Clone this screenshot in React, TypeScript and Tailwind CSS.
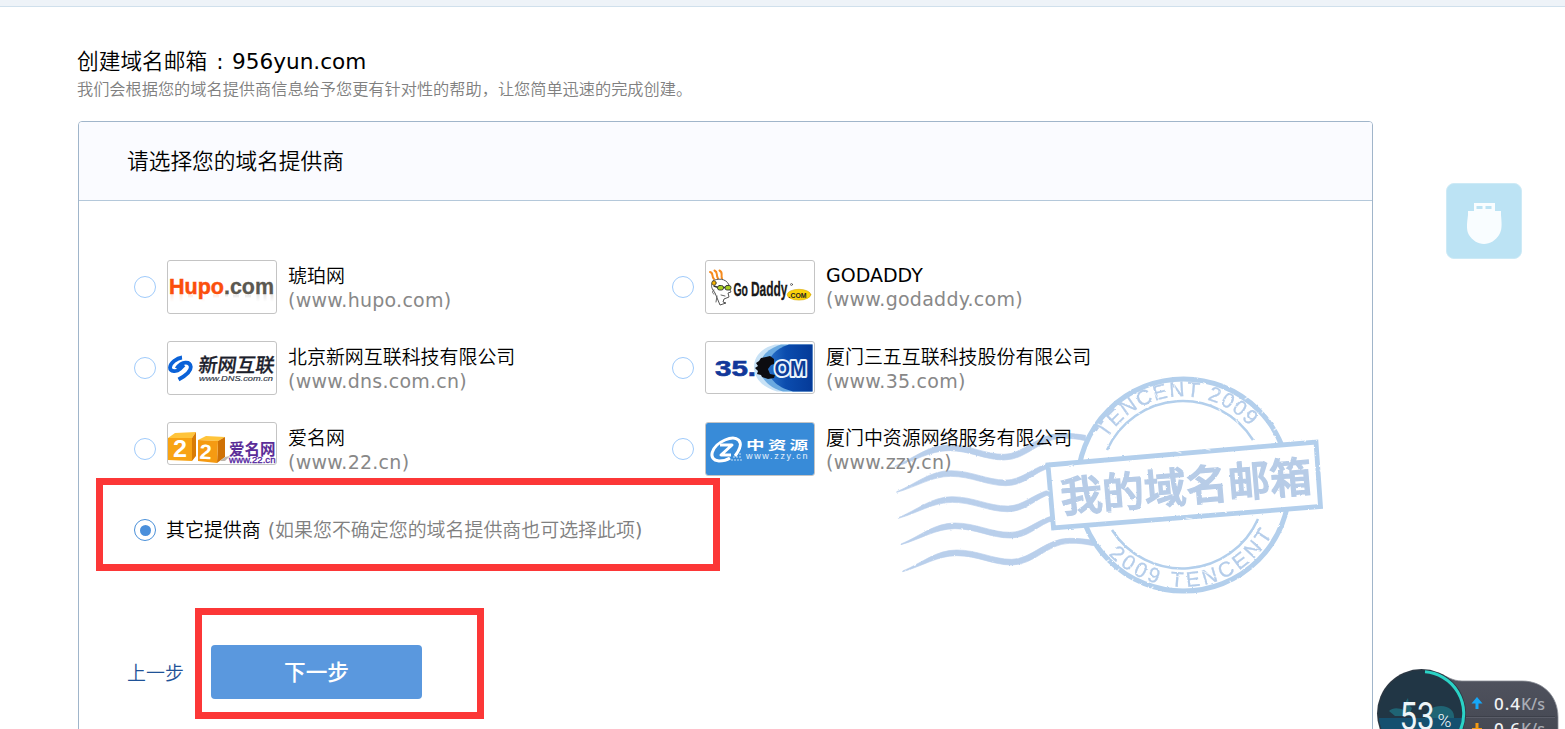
import { FC, ReactNode } from "react";

interface Provider {
  name: ReactNode;
  url: string;
  logo: ReactNode;
  logoClass: string;
  textClass: string;
}

const HupoLogo: FC = () => (
  <svg width="108" height="52" viewBox="1 1 108 52" fontFamily="Liberation Sans, sans-serif" fontWeight="bold" fontSize="22.500">
    <defs>
      <linearGradient id="hupoFade" x1="0" y1="0" x2="0" y2="1">
        <stop offset="0" stopColor="#fff" stopOpacity="0.500" />
        <stop offset="0.800" stopColor="#fff" />
      </linearGradient>
    </defs>
    <g opacity="0.4" strokeWidth="3">
      <path d="M5 34.500v8M14 34.500v8M21 36h5M36 39v3M46 36h6" stroke="#ff8a50" />
      <path d="M58 35h3M66 36h6M78 36h6M91 34.500v7M98 34.500v7M105 34.500v7" stroke="#8c8a84" />
    </g>
    <rect x="2" y="34" width="106" height="10" fill="url(#hupoFade)" />
    <text x="2" y="33.500" fill="#fb4f0c" stroke="#fb4f0c" strokeWidth="0.5" textLength="55" lengthAdjust="spacingAndGlyphs">Hupo</text>
    <text x="57" y="33.500" fill="#5b5850" stroke="#5b5850" strokeWidth="0.3" textLength="50" lengthAdjust="spacingAndGlyphs">.com</text>
  </svg>
);

const GodaddyLogo: FC = () => (
  <svg width="108" height="52" viewBox="1 1 108 52" fill="none" strokeLinecap="round">
    <path d="M5 12c4 1 1 4 4 7M9.500 10.500c4 2 1 4 3.500 8M14.500 10.500c4 2 1 4 2.500 8" stroke="#f68b1f" strokeWidth="2" />
    <path d="M8 21c4-3 13-3 16 4l0 3 2 4-3 1 1 4-5 2-1 3 3 1-6 2-5-12-2-3c-2-3-2-6 0-9z" fill="#fff" stroke="#555" strokeWidth="1" />
    <path d="M9 30c-2 0-2 4 0 4M16 35l4 1M12 36l-1 6" stroke="#666" strokeWidth="1" />
    <circle cx="9" cy="23" r="2.200" fill="#f7b500" stroke="#333" strokeWidth="0.700" />
    <path d="M9 26l4 1.500h12" stroke="#333" strokeWidth="1.400" />
    <rect x="12.500" y="25.500" width="6" height="4.500" rx="2" fill="#a6ce1f" stroke="#333" strokeWidth="0.900" />
    <rect x="20" y="25.500" width="6" height="4.500" rx="2" fill="#a6ce1f" stroke="#333" strokeWidth="0.900" />
    <g fontFamily="Liberation Sans, sans-serif" fontWeight="bold" fill="#181818" stroke="#181818" strokeWidth="0.300">
      <text x="28.500" y="36" fontSize="18" textLength="14.500" lengthAdjust="spacingAndGlyphs">Go</text>
      <text x="46" y="36" fontSize="21" textLength="36.500" lengthAdjust="spacingAndGlyphs">Daddy</text>
    </g>
    <circle cx="86.500" cy="24.500" r="1" stroke="#444" strokeWidth="0.700" />
    <ellipse cx="94" cy="34.700" rx="11.800" ry="5.400" fill="#fbd20b" stroke="#d7a800" strokeWidth="0.600" />
    <text x="83.500" y="37.500" fontFamily="Liberation Sans, sans-serif" fontWeight="bold" fontSize="7.500" fill="#222" textLength="18" lengthAdjust="spacingAndGlyphs">.COM</text>
  </svg>
);

const DnsLogo: FC = () => (
  <svg width="108" height="52" viewBox="1 1 108 52">
    <g fill="none" stroke="#0b62d8" strokeWidth="3.800">
      <path d="M15 16.500C10 17 3 22 3 26.500C3 31 10 31 13 28L17 24" />
      <path d="M9.500 27.500C15 20 23 20 23.800 26C24 31 18 35 11.500 38.500" />
    </g>
    <g transform="skewX(-8)">
      <text x="35" y="31" fontFamily="Noto Sans CJK SC, sans-serif" fontWeight="500" fontSize="19.500" fill="#1b202b" stroke="#1b202b" strokeWidth="0.300" textLength="76" lengthAdjust="spacingAndGlyphs">新网互联</text>
    </g>
    <text x="32" y="40" fontFamily="Liberation Sans, sans-serif" fontStyle="italic" fontSize="8" fill="#2b3343" stroke="#2b3343" strokeWidth="0.150" textLength="74" lengthAdjust="spacingAndGlyphs">www.DNS.com.cn</text>
  </svg>
);

const Com35Logo: FC = () => (
  <svg width="108" height="51" viewBox="1 1 108 51">
    <defs>
      <linearGradient id="blue35" x1="0" x2="1">
        <stop offset="0" stopColor="#2a72c8" />
        <stop offset="0.400" stopColor="#0b4cae" />
        <stop offset="1" stopColor="#053a98" />
      </linearGradient>
    </defs>
    <path d="M107.500 3.500H70C56 7 49 16 49 26S56 46 72 50.500H107.500z" fill="#c8e2f6" />
    <path d="M107.500 3.500H76C62 8 55 16 55 26S62 46 78 50.500H107.500z" fill="#6aa9e0" />
    <path d="M107.500 3.500H84C70 8 63 16 63 26S70 46 88 50.500H107.500z" fill="url(#blue35)" />
    <g fontFamily="Liberation Sans, sans-serif" fontWeight="bold" fontSize="21.500">
      <text x="10" y="34.800" fill="#12389a" stroke="#12389a" strokeWidth="0.600" textLength="41" lengthAdjust="spacingAndGlyphs">35.</text>
      <text x="69.500" y="34.800" fill="#0b3c98" stroke="#e8f3fc" strokeWidth="4" paintOrder="stroke" strokeLinejoin="round" textLength="32" lengthAdjust="spacingAndGlyphs">OM</text>
    </g>
    <path d="M69 18L65 15l-4 1-5 1-2 3-3 2 2 3-3 2 3 3-1 3 4 1 1 2 6 2 6-1 1-3-5-1-2-5 3-4 3-1z" fill="#0c0c10" />
  </svg>
);

const Cn22Logo: FC = () => (
  <svg width="108" height="41" viewBox="1 1 108 41">
    <path d="M1 16l7-5 21-1-4 6z" fill="#ffc43a" />
    <path d="M25 16l4-6v24l-4 5z" fill="#d87b05" />
    <path d="M1 16h24v23L1 38z" fill="#f8a313" />
    <path d="M31 18l8-4 19 1-7 4z" fill="#ffc43a" />
    <path d="M51 19l7-4v20l-8 6z" fill="#cf7104" />
    <path d="M31 18l20 1-1 22-19-2z" fill="#f59a12" />
    <path d="M58 35l5-1-5 5h-5z" fill="#bdb6ad" />
    <g fontFamily="Liberation Sans, sans-serif" fontWeight="bold" fill="#fff">
      <text x="6" y="35" fontSize="23" textLength="14" lengthAdjust="spacingAndGlyphs">2</text>
      <text x="32.500" y="37" fontSize="21" textLength="12" lengthAdjust="spacingAndGlyphs" transform="rotate(3 39 30)">2</text>
    </g>
    <text x="62" y="32.500" fontFamily="Noto Sans CJK SC, sans-serif" fontWeight="bold" fontSize="15.500" fill="#5b2d98" textLength="46.500" lengthAdjust="spacingAndGlyphs">爱名网</text>
    <text x="62" y="40.500" fontFamily="Liberation Sans, sans-serif" fontSize="8.500" fill="#5426a0" stroke="#5426a0" strokeWidth="0.300" textLength="46.500" lengthAdjust="spacingAndGlyphs">www.22.cn</text>
  </svg>
);

const ZzyLogo: FC = () => (
  <svg width="108" height="52" viewBox="1 1 108 52">
    <rect width="110" height="54" fill="#388bd8" />
    <g fill="none" stroke="#fff">
      <path d="M30 34C42 18 31 13 20 18C6 24 2 38 14 39C18 39 22 38 25 36" strokeWidth="3" />
      <path d="M15 23H27L16 33H26" strokeWidth="3" strokeLinejoin="round" />
      <path d="M26 38h11M28 35h9M31 32h6" strokeWidth="1.200" strokeDasharray="2 1" opacity="0.700" />
    </g>
    <g transform="translate(41 28) scale(1.55 1)">
      <text fontFamily="Noto Sans CJK SC, sans-serif" fontWeight="bold" fontSize="12" fill="#fff" textLength="40">中资源</text>
    </g>
    <text x="41" y="36.500" fontFamily="Liberation Sans, sans-serif" fontSize="9" fill="#e6f2fc" textLength="61.500">www.zzy.cn</text>
  </svg>
);

const leftProviders: Provider[] = [
  {
    name: "琥珀网",
    url: "(www.hupo.com)",
    logo: <HupoLogo />,
    logoClass: "h-[54px]",
    textClass: "pt-1",
  },
  {
    name: "北京新网互联科技有限公司",
    url: "(www.dns.com.cn)",
    logo: <DnsLogo />,
    logoClass: "h-[54px]",
    textClass: "pt-1",
  },
  {
    name: "爱名网",
    url: "(www.22.cn)",
    logo: <Cn22Logo />,
    logoClass: "h-[43px]",
    textClass: "pt-1",
  },
];

const rightProviders: Provider[] = [
  {
    name: <span className="text-[19px] font-normal">GODADDY</span>,
    url: "(www.godaddy.com)",
    logo: <GodaddyLogo />,
    logoClass: "h-[54px]",
    textClass: "pt-[3px]",
  },
  {
    name: "厦门三五互联科技股份有限公司",
    url: "(www.35.com)",
    logo: <Com35Logo />,
    logoClass: "h-[53px]",
    textClass: "pt-1",
  },
  {
    name: "厦门中资源网络服务有限公司",
    url: "(www.zzy.cn)",
    logo: <ZzyLogo />,
    logoClass: "h-[54px]",
    textClass: "pt-1",
  },
];

const ProviderOption: FC<{ provider: Provider }> = ({ provider }) => (
  <label className="flex h-[81px] items-start">
    <span className="mt-4 size-[22px] shrink-0 rounded-full border border-[#a0cbfb]" />
    <span
      className={`ml-[11px] w-[110px] shrink-0 overflow-hidden rounded-[3px] border border-[#c4c4c4] bg-white ${provider.logoClass}`}
    >
      {provider.logo}
    </span>
    <span
      className={`ml-[11px] flex flex-col whitespace-nowrap leading-6 ${provider.textClass}`}
    >
      <span className="text-black">{provider.name}</span>
      <span className="text-[19px] font-normal tracking-[0.26px] text-[#888]">
        {provider.url}
      </span>
    </span>
  </label>
);

// Wave lines are drawn on a 3x grid and taper towards their left end
const shortWave =
  "M0 0C60-25 100-63 162-63C225-63 270-35 327-35C375-35 405-72 460-86V-72C410-58 385-18 327-18C270-18 225-46 162-46C105-46 60-15 0 2Z";
const longWave =
  "M0 0C60-25 100-63 162-63C225-63 270-35 327-35C385-35 430-98 500-98C530-98 545-96 572-92V-76C545-81 530-84 500-83C435-82 395-18 327-18C270-18 225-46 162-46C105-46 60-15 0 2Z";

const Stamp: FC = () => (
  <svg className="absolute left-[811px] top-[248px]" width="440" height="230" viewBox="890 370 440 230">
    <defs>
      <filter id="rough" x="-5%" y="-5%" width="110%" height="110%">
        <feTurbulence type="fractalNoise" baseFrequency="0.28" numOctaves="2" seed="4" result="noise" />
        <feDisplacementMap in="SourceGraphic" in2="noise" scale="2" xChannelSelector="R" yChannelSelector="G" />
      </filter>
      <path id="arcTop" d="M1107 439A89 89 0 0 1 1251 428" />
      <path id="arcBottom" d="M1108.500 554.500A102 102 0 0 0 1273 533" />
    </defs>
    <g filter="url(#rough)">
      <g fill="#b9cfeb" stroke="#b9cfeb" strokeWidth="2">
        <path d={longWave} transform="translate(895 466) scale(.3333)" />
        <path d={shortWave} transform="translate(896.700 491.700) scale(.3333)" />
        <path d={shortWave} transform="translate(898.300 517.700) scale(.3333)" />
        <path d={shortWave} transform="translate(901 544) scale(.3333)" />
        <path d={longWave} transform="translate(902.700 571) scale(.3333)" />
      </g>
      <g fill="none" stroke="#b3cfec">
        <circle cx="1183.500" cy="485" r="106" strokeWidth="5" />
        <path d="M1107 450A83 83 0 0 1 1253 440M1112 530A83 83 0 0 0 1258 519" strokeWidth="2.500" />
        <path d="M1048 465L1316 442L1320.500 506.500L1053.500 528Z" fill="#fff" strokeWidth="4.800" />
      </g>
      <g fill="#b5cdea" stroke="#b5cdea" strokeWidth="0.300" fontFamily="Liberation Sans, sans-serif" fontSize="21">
        <text textLength="166">
          <textPath href="#arcTop" textLength="166">TENCENT 2009</textPath>
        </text>
        <text textLength="192">
          <textPath href="#arcBottom" textLength="192">2009 TENCENT</textPath>
        </text>
      </g>
      <text
        x="1186"
        y="502"
        textAnchor="middle"
        transform="rotate(-4.8 1185 486)"
        fontFamily="Noto Sans CJK SC, sans-serif"
        fontWeight="500"
        fontSize="42"
        fill="#b7cce7"
        stroke="#b7cce7"
        strokeWidth="1.300"
      >
        我的域名邮箱
      </text>
    </g>
    {/* worn patches in the ink */}
    <g fill="none" stroke="#fff" strokeWidth="1.100" strokeLinecap="round" opacity="0.800">
      <path d="M1098 424l4 2M1104 563l5-3M1116 573l3-4M1131 583l2-4M1150 590l3-3M1090 548l4-1M1245 399l3-2M1262 413l2-3M1274 430l3-2M1176 451l5 2M1186 518l6 1M1206 449l4 1M1230 581l2 3M1252 568l3 2M1046 490l3 1M1320 470l2 3M1069 466l4-1M1128 415l2 2M1219 409l2 3M1236 420l2 3" />
      <path d="M1122 405l18 9M1151 387l8 13M1174 384l3 12M1196 387l8 10M1224 399l13 8M1127 562l7 10M1174 576l12 2M1202 571l14 6M1228 556l9 12M1252 540l10 5" strokeWidth="0.900" />
    </g>
  </svg>
);

const DriveButton: FC = () => (
  <div className="absolute left-[1446px] top-[183px] size-[76px] rounded-[8px] border border-[#cdeaf6] bg-[#bce3f4]">
    <svg width="74" height="74" viewBox="1 1 74 74">
      <path
        d="M28 20H49V28H55V32C56 43 56 47 53 52C50 57 44 61 38 61C32 61 26 57 23 52C20 47 21 40 22 32V28H28Z"
        fill="#f9fdff"
      />
      <path d="M30.500 23h6v3h-6zM39.500 23h6v3h-6z" fill="#bce3f4" />
    </svg>
  </div>
);

const SpeedWidget: FC = () => (
  <svg className="absolute left-[1370px] top-[660px]" width="195" height="69" viewBox="1370 660 195 69">
    <defs>
      <linearGradient id="pill" x1="0" y1="0" x2="0" y2="1">
        <stop offset="0" stopColor="#50535f" />
        <stop offset="1" stopColor="#444751" />
      </linearGradient>
      <clipPath id="dial">
        <circle cx="1421.500" cy="713.500" r="43" />
      </clipPath>
    </defs>
    <path
      d="M1438 673C1447 676 1452 681 1462 681H1522C1544 681 1558 697 1558 717V740H1430Z"
      fill="url(#pill)"
      stroke="#888b94"
      strokeWidth="0.800"
    />
    <path d="M1466 716.500H1555" stroke="#3d404a" />
    <path d="M1466 717.500H1555" stroke="#5a5d68" />
    <circle cx="1421.500" cy="713.500" r="44.500" fill="#2b3743" />
    <g clipPath="url(#dial)">
      <rect x="1377" y="669" width="89" height="60" fill="#213645" />
      <path d="M1389 711c4-4 10-3 15-1l2-9 2-3 1 7 3 3-3 8h-14z" fill="#1f6474" />
      <path d="M1425 719c1-9 8-13 16-13s14 5 13 13z" fill="#1f6474" />
      <rect x="1377" y="718" width="89" height="12" fill="#15506f" />
    </g>
    <path d="M1425 671.800A42 42 0 0 1 1460 731" fill="none" stroke="#2bd3c6" strokeWidth="3" />
    <g fontFamily="Roboto, sans-serif" fill="#eef5f8">
      <text x="1399.500" y="729.500" fontSize="38" fontWeight="400" textLength="35" lengthAdjust="spacingAndGlyphs">53</text>
      <text x="1437.500" y="727" fontSize="18" textLength="14" lengthAdjust="spacingAndGlyphs">%</text>
    </g>
    <path d="M1477 697L1482.500 703.500H1478.500V709H1475.500V703.500H1471.500Z" fill="#16a7f7" />
    <path d="M1475.500 723H1478.500V728H1482V730H1472V728H1475.500Z" fill="#f59a12" />
    <g fontFamily="Noto Sans, sans-serif" fontSize="17" fontWeight="500">
      <text x="1494" y="709.500" fill="#f2f3f5" textLength="26">0.4</text>
      <text x="1521" y="709.500" fill="#a9acb4" textLength="24" lengthAdjust="spacingAndGlyphs">K/s</text>
      <text x="1494" y="735" fill="#f2f3f5" textLength="26">0.6</text>
      <text x="1521" y="735" fill="#a9acb4" textLength="24" lengthAdjust="spacingAndGlyphs">K/s</text>
    </g>
  </svg>
);

export default function App() {
  return (
    <div className="relative h-[729px] w-full overflow-hidden bg-white font-['DejaVu_Sans','Noto_Sans_CJK_SC',sans-serif] text-[18.95px] font-[350]">
      <div className="h-[7px] border-b border-[#d0e0ec] bg-[#eef3f8]" />

      <main className="ml-[78px] w-[1295px] pt-[39px]">
        <h1 className="-ml-px flex h-8 items-center whitespace-nowrap text-[21.7px] text-black">
          <span className="w-[131px]">创建域名邮箱</span>
          <span className="w-6 text-center font-normal">:</span>
          <span className="text-[21.6px] font-normal">956yun.com</span>
        </h1>
        <p className="-ml-px h-6 whitespace-nowrap text-[16.2px] leading-6 text-[#808080]">
          我们会根据您的域名提供商信息给予您更有针对性的帮助{"\uff0c"}让您简单迅速的完成创建。
        </p>

        <section className="relative mt-[19px] h-[640px] rounded-[4px] border border-[#a0b5ca]">
          <h2 className="flex h-[79px] items-center rounded-t-[3px] border-b border-[#b4c8da] bg-[#fafbff] pl-12 pt-0.5 text-[21.7px] text-black">
            请选择您的域名提供商
          </h2>
          <Stamp />

          <div className="relative pl-[55px] pt-[59px]">
            <div className="grid grid-cols-[538px_1fr]">
              <div>
                {leftProviders.map((provider) => (
                  <ProviderOption key={provider.url} provider={provider} />
                ))}
              </div>
              <div>
                {rightProviders.map((provider) => (
                  <ProviderOption key={provider.url} provider={provider} />
                ))}
              </div>
            </div>

            <label className="flex h-[54px] items-center whitespace-nowrap">
              <span className="flex size-[22px] items-center justify-center rounded-full border border-[#4a90d9]">
                <span className="size-[11px] rounded-full bg-[#4a8fdb]" />
              </span>
              <span className="ml-2.5 pt-px text-black">其它提供商</span>
              <span className="ml-[7px] pt-px text-[#808080]">
                <span className="font-normal">(</span>
                如果您不确定您的域名提供商也可选择此项
                <span className="font-normal">)</span>
              </span>
            </label>
          </div>

          <div className="relative mt-[88px] flex h-[54px] items-center pl-12">
            <a className="w-[84px] pt-0.5 text-[#1f5297]">上一步</a>
            <button className="h-[54px] w-[211px] rounded-[4px] bg-[#5a98de] pt-0.5 text-[21.7px] font-medium text-white">
              下一步
            </button>
          </div>
        </section>
      </main>

      <div className="absolute left-24 top-[478px] h-[93px] w-[624px] border-[7px] border-[#fc3737]" />
      <div className="absolute left-[195px] top-[608px] h-[111px] w-[289px] border-[7px] border-[#fc3737]" />

      <DriveButton />
      <SpeedWidget />
    </div>
  );
}
